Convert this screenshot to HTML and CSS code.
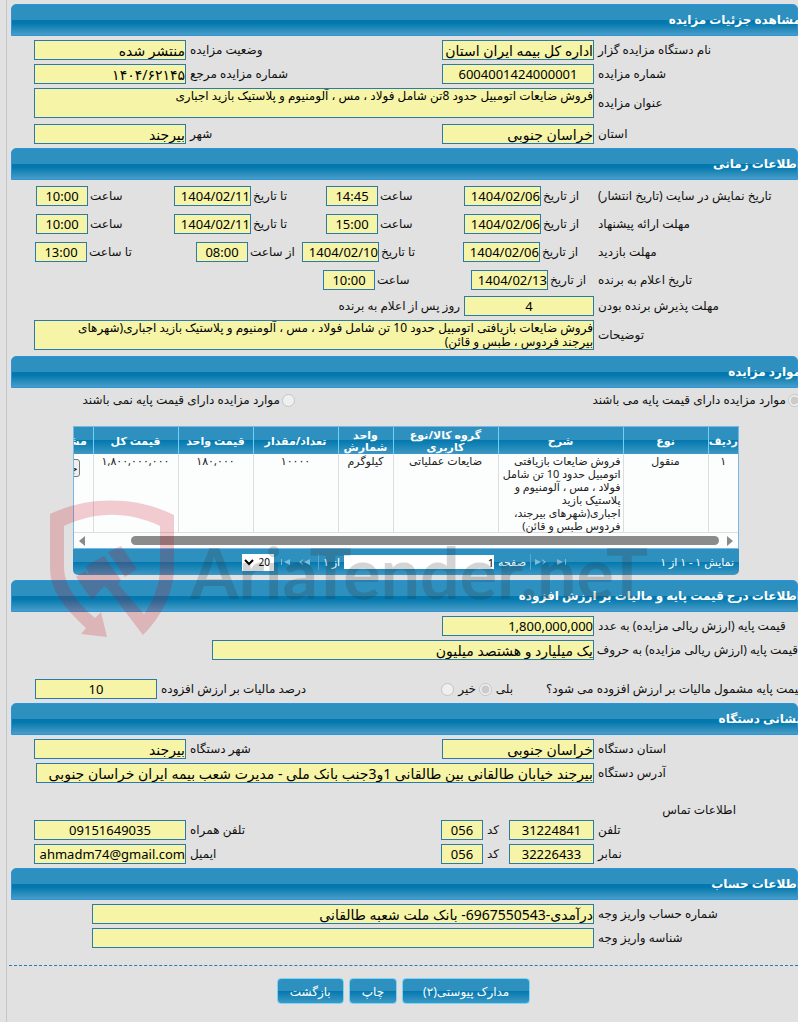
FILE: index.html
```html
<!DOCTYPE html>
<html lang="fa" dir="rtl">
<head>
    <meta charset="UTF-8">
    <meta name="viewport" content="width=device-width, initial-scale=1.0">
    <title>مشاهده جزئیات مزایده</title>
    <link rel="stylesheet" href="styles.css">
</head>
<body>
    <main class="page">
        <!-- Auction details -->
        <h2 class="bar"><span>مشاهده جزئیات مزایده</span></h2>
        <section class="rows">
            <div class="row">
                <label for="org">نام دستگاه مزایده گزار</label>
                <input class="field" id="org" value="اداره کل بیمه ایران استان خراسان جنوبی" readonly>
                <label for="status">وضعیت مزایده</label>
                <input class="field" id="status" value="منتشر شده" readonly>
            </div>
            <div class="row">
                <label for="number">شماره مزایده</label>
                <input class="field center" id="number" value="6004001424000001" readonly>
                <label for="ref">شماره مزایده مرجع</label>
                <input class="field" id="ref" value="۱۴۰۴/۶۲۱۴۵" readonly>
            </div>
            <div class="row row-wide">
                <label for="subject">عنوان مزایده</label>
                <textarea class="field area" id="subject" readonly>فروش ضایعات اتومبیل حدود 8تن شامل فولاد ، مس ، آلومنیوم و پلاستیک بازید اجباری</textarea>
            </div>
            <div class="row row-city">
                <label for="state">استان</label>
                <input class="field" id="state" value="خراسان جنوبی" readonly>
                <label for="city">شهر</label>
                <input class="field" id="city" value="بیرجند" readonly>
            </div>
        </section>

        <!-- Time table -->
        <h2 class="bar"><span>اطلاعات زمانی</span></h2>
        <section class="rows rows-time">
            <div class="time">
                <span>تاریخ نمایش در سایت (تاریخ انتشار)</span>
                <label for="d1">از تاریخ</label>
                <input class="field number" id="d1" value="1404/02/06" readonly>
                <label for="h1">ساعت</label>
                <input class="field center" id="h1" value="14:45" readonly>
                <label for="d2">تا تاریخ</label>
                <input class="field number" id="d2" value="1404/02/11" readonly>
                <label for="h2">ساعت</label>
                <input class="field center" id="h2" value="10:00" readonly>
            </div>
            <div class="time">
                <span>مهلت ارائه پیشنهاد</span>
                <label for="d3">از تاریخ</label>
                <input class="field number" id="d3" value="1404/02/06" readonly>
                <label for="h3">ساعت</label>
                <input class="field center" id="h3" value="15:00" readonly>
                <label for="d4">تا تاریخ</label>
                <input class="field number" id="d4" value="1404/02/11" readonly>
                <label for="h4">ساعت</label>
                <input class="field center" id="h4" value="10:00" readonly>
            </div>
            <div class="time time-visit">
                <span>مهلت بازدید</span>
                <label for="d5">از تاریخ</label>
                <input class="field number" id="d5" value="1404/02/06" readonly>
                <label for="d6">تا تاریخ</label>
                <input class="field number" id="d6" value="1404/02/10" readonly>
                <label for="h5">از ساعت</label>
                <input class="field center" id="h5" value="08:00" readonly>
                <label for="h6">تا ساعت</label>
                <input class="field center" id="h6" value="13:00" readonly>
            </div>
            <div class="time time-winner">
                <span>تاریخ اعلام به برنده</span>
                <label for="d7">از تاریخ</label>
                <input class="field number" id="d7" value="1404/02/13" readonly>
                <label for="h7">ساعت</label>
                <input class="field center" id="h7" value="10:00" readonly>
            </div>
            <div class="row row-accept">
                <label for="accept">مهلت پذیرش برنده بودن</label>
                <input class="field center" id="accept" value="4" readonly>
                <span>روز پس از اعلام به برنده</span>
            </div>
            <div class="row row-wide">
                <label for="notes">توضیحات</label>
                <textarea class="field area" id="notes" readonly>فروش ضایعات بازیافتی اتومبیل حدود 10 تن شامل فولاد ، مس ، آلومنیوم و پلاستیک بازید اجباری(شهرهای بیرجند فردوس ، طبس و قائن)</textarea>
            </div>
        </section>

        <!-- Items -->
        <h2 class="bar"><span>موارد مزایده</span></h2>
        <section class="items">
            <div class="choices">
                <label><input type="radio" name="base" checked disabled>موارد مزایده دارای قیمت پایه می باشند</label>
                <label><input type="radio" name="base" disabled>موارد مزایده دارای قیمت پایه نمی باشند</label>
            </div>
            <div class="grid">
                <div class="grid-view">
                    <table>
                        <colgroup>
                            <col class="w30"><col class="w85"><col class="w125"><col class="w105"><col class="w55"><col class="w85"><col class="w75"><col class="w85"><col class="w55">
                        </colgroup>
                        <thead>
                            <tr>
                                <th>ردیف</th>
                                <th>نوع</th>
                                <th>شرح</th>
                                <th>گروه کالا/نوع کاربری</th>
                                <th>واحد شمارش</th>
                                <th>تعداد/مقدار</th>
                                <th>قیمت واحد</th>
                                <th>قیمت کل</th>
                                <th>مشاهده</th>
                            </tr>
                        </thead>
                        <tbody>
                            <tr>
                                <td>۱</td>
                                <td>منقول</td>
                                <td class="desc">فروش ضایعات بازیافتی اتومبیل حدود 10 تن شامل فولاد ، مس ، آلومنیوم و پلاستیک بازید اجباری(شهرهای بیرجند، فردوس طبس و قائن)</td>
                                <td>ضایعات عملیاتی</td>
                                <td>کیلوگرم</td>
                                <td>۱۰۰۰۰</td>
                                <td>۱۸۰,۰۰۰</td>
                                <td>۱,۸۰۰,۰۰۰,۰۰۰</td>
                                <td class="more"><button type="button">جزئیات</button></td>
                            </tr>
                        </tbody>
                    </table>
                    <div class="scroll">
                        <svg width="6" height="10" viewBox="0 0 6 10"><path d="M0 0l6 5-6 5z"/></svg>
                        <span class="thumb"></span>
                        <svg width="6" height="10" viewBox="0 0 6 10"><path d="M6 0L0 5l6 5z"/></svg>
                    </div>
                </div>
                <div class="pager">
                    <span class="info">نمایش ۱ - ۱ از ۱</span>
                    <button type="button" class="nav" aria-label="اولین" disabled><svg width="10" height="8" viewBox="0 0 10 8"><path d="M0 1l6 3-6 3zM8 1h1v6H8z"/></svg></button>
                    <button type="button" class="nav" aria-label="قبلی" disabled><svg width="12" height="8" viewBox="0 0 12 8"><path d="M0 1l6 3-6 3zM7 1l4 3-4 3V6l2-2-2-2z"/></svg></button>
                    <label class="sep" for="pageno">صفحه</label>
                    <input id="pageno" value="1">
                    <span class="of">از ۱</span>
                    <button type="button" class="nav" aria-label="بعدی" disabled><svg width="12" height="8" viewBox="0 0 12 8"><path d="M12 1L6 4l6 3zM5 1L1 4l4 3V6L3 4l2-2z"/></svg></button>
                    <button type="button" class="nav" aria-label="آخرین" disabled><svg width="10" height="8" viewBox="0 0 10 8"><path d="M10 1L4 4l6 3zM1 1h1v6H1z"/></svg></button>
                    <select aria-label="تعداد"><option>20</option></select>
                </div>
            </div>
        </section>

        <!-- Base price and VAT -->
        <h2 class="bar"><span>اطلاعات درج قیمت پایه و مالیات بر ارزش افزوده</span></h2>
        <section class="rows">
            <div class="row">
                <label for="price">قیمت پایه (ارزش ریالی مزایده) به عدد</label>
                <input class="field number" id="price" value="1,800,000,000" readonly>
            </div>
            <div class="row row-words">
                <label for="words">قیمت پایه (ارزش ریالی مزایده) به حروف</label>
                <input class="field" id="words" value="یک میلیارد و هشتصد میلیون" readonly>
            </div>
            <div class="vat">
                <span class="question">قیمت پایه مشمول مالیات بر ارزش افزوده می شود؟</span>
                <label>بلی <input type="radio" name="vat" checked disabled></label>
                <label>خیر <input type="radio" name="vat" disabled></label>
                <label class="rate" for="rate">درصد مالیات بر ارزش افزوده</label>
                <input class="field center" id="rate" value="10" readonly>
            </div>
        </section>

        <!-- Address -->
        <h2 class="bar"><span>نشانی دستگاه</span></h2>
        <section class="rows">
            <div class="row">
                <label for="orgstate">استان دستگاه</label>
                <input class="field" id="orgstate" value="خراسان جنوبی" readonly>
                <label for="orgcity">شهر دستگاه</label>
                <input class="field" id="orgcity" value="بیرجند" readonly>
            </div>
            <div class="row row-address">
                <label for="address">آدرس دستگاه</label>
                <input class="field" id="address" value="بیرجند خیابان طالقانی بین طالقانی 1و3جنب بانک ملی - مدیرت شعب بیمه ایران خراسان جنوبی" readonly>
            </div>
            <p class="contact">اطلاعات تماس</p>
            <div class="row row-phone">
                <label for="phone">تلفن</label>
                <input class="field center" id="phone" value="31224841" readonly>
                <label for="code1">کد</label>
                <input class="field center" id="code1" value="056" readonly>
                <label for="mobile">تلفن همراه</label>
                <input class="field center" id="mobile" value="09151649035" readonly>
            </div>
            <div class="row row-phone">
                <label for="fax">نمابر</label>
                <input class="field center" id="fax" value="32226433" readonly>
                <label for="code2">کد</label>
                <input class="field center" id="code2" value="056" readonly>
                <label for="email">ایمیل</label>
                <input class="field number" id="email" value="ahmadm74@gmail.com" readonly>
            </div>
        </section>

        <!-- Bank account -->
        <h2 class="bar"><span>اطلاعات حساب</span></h2>
        <section class="rows">
            <div class="row row-account">
                <label for="account">شماره حساب واریز وجه</label>
                <input class="field" id="account" value="درآمدی-6967550543- بانک ملت شعبه طالقانی" readonly>
            </div>
            <div class="row row-account">
                <label for="payid">شناسه واریز وجه</label>
                <input class="field" id="payid" value="" readonly>
            </div>
        </section>

        <div class="actions">
            <button type="button" class="docs">مدارک پیوستی(۲)</button>
            <button type="button">چاپ</button>
            <button type="button">بازگشت</button>
        </div>

        <div class="watermark" dir="ltr">
            <svg width="126" height="140" viewBox="0 0 126 140" fill="#c80a1c">
                <path d="M0 14C38-4 86-4 124 15V67C124 92 112 116 93 135L58 89 54 86 42 100 26 77 35 71 39 75 36 66 54 56 71 80 68 84 94 114C104 100 110 84 110 67V26C78 11 46 11 14 26V67C14 84 26 102 45 118L51 112 57 137 31 134 36 128C10 104 0 88 0 67Z"/>
                <path d="M58 52l13-6 16 23-12 8z"/>
            </svg>
            <span>AriaTender.neT</span>
        </div>
    </main>
</body>
</html>
```
FILE: styles.css
```css
* {
    box-sizing: border-box;
}
body {
    margin: 0;
    overflow-x: hidden;
    background-color: #e1e1e1;
    color: #111;
    font-family: "Noto Sans", "DejaVu Sans", sans-serif;
    font-size: 12px;
    line-height: 16px;
}
input, textarea, select, button {
    font-family: inherit;
}
.page {
    position: relative;
    min-height: 100vh;
    margin-left: 6px;
    padding-top: 4px;
    border-left: 1px solid #c6c6c6;
}

/* section titles */
.bar {
    display: flex;
    align-items: center;
    height: 32px;
    margin: 0 0 0 4px;
    border: 1px solid #2b94e0;
    border-radius: 5px 5px 0 0;
    background: linear-gradient(#2e90be 50%, #0378ae 50%, #0378ae 60%, #4a9dc6);
    color: #fff;
    font-size: 12px;
    font-weight: bold;
}
.bar span {
    margin-right: -4px;
}

/* form rows */
.rows {
    display: grid;
    gap: 4px;
    padding: 4px 0 4px 27px;
}
.row {
    display: grid;
    grid-template-columns: 200px 152px 1fr 152px;
    gap: 4px;
    align-items: center;
}
.row label {
    text-align: left;
    white-space: nowrap;
}
.row-wide {
    grid-template-columns: 200px 1fr;
}
.row-address {
    grid-template-columns: 200px 1fr;
    padding-left: 2px;
}
.row-city {
    margin-top: 2px;
}
.row-accept {
    grid-template-columns: 200px 130px 1fr;
}
.row-words {
    grid-template-columns: 200px 1fr;
    padding-left: 178px;
}
.row-phone {
    grid-template-columns: 200px 85px 18px 42px 1fr 152px;
}
.row-account {
    grid-template-columns: 200px 1fr;
    padding-left: 58px;
}
.field {
    width: 100%;
    min-width: 0;
    height: 20px;
    margin: 0;
    padding: 0;
    border: 1px solid #2a7aad;
    border-radius: 0;
    outline: none;
    background-color: #f6f4a6;
    color: #000;
    font-size: 14px;
}
.number, .center {
    font-size: 13px;
}
.center {
    text-align: center;
}
.area {
    display: block;
    height: 30px;
    padding-left: 20px;
    overflow: hidden;
    resize: none;
    font-size: 12px;
    line-height: 14px;
}

/* dates and hours */
.rows-time {
    padding-top: 6px;
    padding-bottom: 6px;
}
.time {
    display: grid;
    grid-template-columns: 200px 53px 77px 82px 52px 71px 77px 1fr 52px;
    column-gap: 2px;
    align-items: center;
    margin-bottom: 4px;
    padding-left: 2px;
    text-align: left;
    white-space: nowrap;
}
.time-visit {
    grid-template-columns: 200px 54px 77px 80px 77px 50px 52px 1fr 52px;
    padding-left: 1px;
}
.time-winner {
    grid-template-columns: 200px 46px 77px 92px 52px;
    margin-bottom: 2px;
}
.time .number {
    text-align: right;
}

/* items grid */
.items {
    padding: 4px 59px 5px 66px;
}
input[type="radio"] {
    width: 13px;
    height: 13px;
    margin: 0;
}
.choices {
    display: grid;
    grid-template-columns: 506px 1fr;
    height: 34px;
    margin-right: -62px;
    white-space: nowrap;
}
.choices label {
    display: flex;
    align-items: center;
    gap: 2px;
    height: 16px;
}
.grid-view {
    overflow: hidden;
    border: 1px solid #79b7e7;
    background-color: #fcfdfd;
}
.grid table {
    width: 700px;
    table-layout: fixed;
    border-collapse: collapse;
}
.w30 { width: 30px; }
.w55 { width: 55px; }
.w75 { width: 75px; }
.w85 { width: 85px; }
.w105 { width: 105px; }
.w125 { width: 125px; }
.grid th {
    height: 27px;
    padding: 0;
    border-left: 1px solid #70d0f8;
    background: linear-gradient(#2e90be 50%, #0378ae 50%, #3e98c4);
    color: #fff;
    font-size: 11px;
    line-height: 12px;
}
.grid td {
    height: 78px;
    padding: 0 2px;
    border-left: 1px solid #ddd;
    color: #222;
    font-size: 11px;
    line-height: 13px;
    text-align: center;
    vertical-align: top;
}
.grid td.desc {
    text-align: right;
}
.grid td.more {
    padding: 5px 13px;
    text-align: right;
}
.more button {
    height: 18px;
    padding: 0 1px;
    border: 1px solid #767676;
    border-radius: 3px;
    font-size: 10px;
}
.scroll {
    display: flex;
    align-items: center;
    gap: 8px;
    height: 16px;
    padding: 0 5px;
    border-top: 1px solid #ddd;
    fill: #8a8a8a;
}
.thumb {
    flex: 1;
    height: 9px;
    margin-left: 38px;
    border-radius: 5px;
    background-color: #8b8b8b;
}
.pager {
    display: flex;
    align-items: center;
    height: 26px;
    padding: 0 5px;
    border-radius: 0 0 5px 5px;
    background: linear-gradient(#2e90be 50%, #0378ae 50%, #3e98c4);
    color: #fff;
    font-size: 11px;
    white-space: nowrap;
}
.info {
    width: 163px;
}
.nav {
    display: flex;
    width: 20px;
    padding: 0 4px;
    border: 0;
    background: none;
    fill: #7dbbd9;
}
.sep {
    padding: 0 4px;
    border-right: 1px solid #5aa9cf;
}
.pager input {
    width: 150px;
    height: 14px;
    padding: 0;
    border: 0;
    font-size: 11px;
}
.of {
    margin: 0 4px;
    padding-left: 4px;
    border-left: 1px solid #5aa9cf;
}
.pager select {
    width: 32px;
    height: 17px;
    padding: 0;
    border: 0;
    background-color: #fff;
    font-size: 10px;
}

/* VAT */
.vat {
    display: grid;
    grid-template-columns: 285px 37px 37px 1fr 122px;
    align-items: center;
    margin-top: 15px;
    padding-left: 1px;
    white-space: nowrap;
}
.vat label {
    display: flex;
    align-items: center;
    gap: 4px;
}
.vat .question {
    margin-right: -8px;
    padding-left: 33px;
    text-align: left;
}
.vat .rate {
    justify-content: flex-end;
    padding-left: 4px;
}
.contact {
    margin: 17px 62px 0 0;
    line-height: 12px;
}

/* buttons */
.actions {
    display: flex;
    justify-content: center;
    gap: 5px;
    margin: 13px 0 0 2px;
    padding: 12px 0 18px;
    border-top: 1px dashed #2a7aad;
}
.actions button {
    height: 26px;
    padding: 0 12px;
    border: 1px solid #77d5f7;
    border-radius: 4px;
    background: linear-gradient(#2e90be 50%, #0378ae 50%, #3e98c4);
    color: #fff;
    font-size: 12px;
}
.actions .docs {
    padding: 0 20px;
}

.watermark {
    position: absolute;
    top: 500px;
    left: 43px;
    display: flex;
    gap: 14px;
    color: #303030;
    font: bold 70px/144px Lato, sans-serif;
    opacity: 0.2;
    pointer-events: none;
}
```
